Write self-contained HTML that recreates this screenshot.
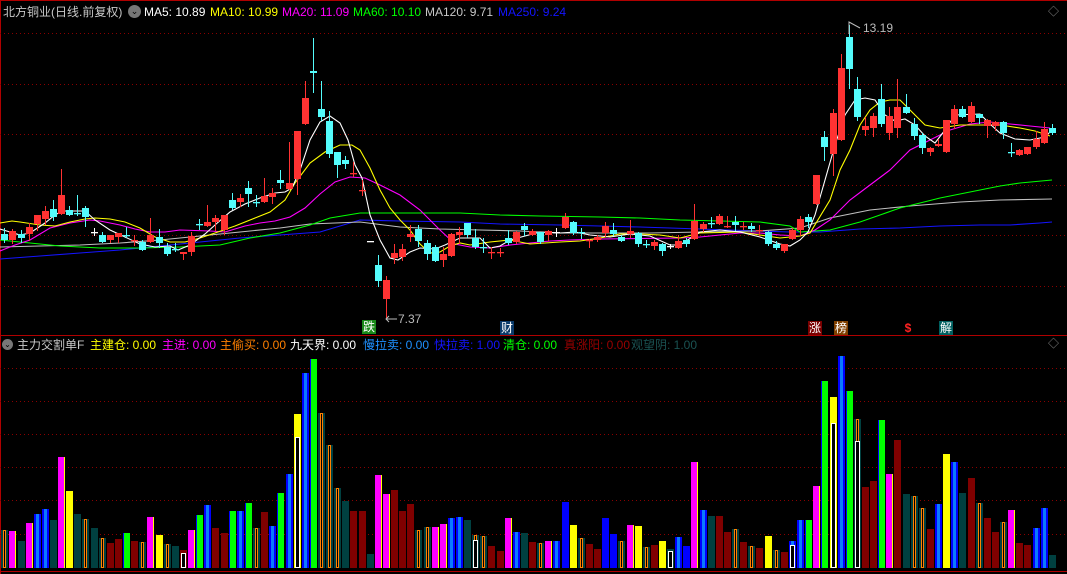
<!DOCTYPE html>
<html><head><meta charset="utf-8">
<style>
html,body{margin:0;padding:0;background:#000;}
#w{position:relative;width:1067px;height:574px;overflow:hidden;background:#000;font-family:"Liberation Sans","Noto Sans CJK SC",sans-serif;font-size:12px;}
.t{position:absolute;white-space:nowrap;line-height:14px;}
svg{position:absolute;left:0;top:0;}
.mk{position:absolute;width:14px;height:14px;color:#fff;font-size:12px;line-height:14px;text-align:center;}
</style></head><body>
<div id="w">
<svg id="s" width="1067" height="574" viewBox="0 0 1067 574"></svg>
<div class="t" style="left:3px;top:5px;color:#c8c8c8">北方铜业(日线.前复权)</div>
<div class="t" style="left:128px;top:5px;width:13px;height:13px;border-radius:7px;background:#777;color:#000;font-size:9px;line-height:13px;text-align:center">⌄</div>
<div class="t" style="left:144px;top:5px;color:#fff">MA5: 10.89</div>
<div class="t" style="left:210px;top:5px;color:#ff0">MA10: 10.99</div>
<div class="t" style="left:282px;top:5px;color:#f0f">MA20: 11.09</div>
<div class="t" style="left:353px;top:5px;color:#0f0">MA60: 10.10</div>
<div class="t" style="left:425px;top:5px;color:#c8c8c8">MA120: 9.71</div>
<div class="t" style="left:498px;top:5px;color:#1414ff">MA250: 9.24</div>
<div class="t" style="left:1048px;top:5px;color:#888;font-size:11px">◇</div>

<div class="t" style="left:2px;top:339px;width:11px;height:11px;border-radius:6px;background:#777;color:#000;font-size:8px;line-height:11px;text-align:center">⌄</div>
<div class="t" style="left:17px;top:338px;color:#c8c8c8">主力交割单F</div>
<div class="t" style="left:90px;top:338px;color:#ff0">主建仓: 0.00</div>
<div class="t" style="left:162px;top:338px;color:#f0f">主进: 0.00</div>
<div class="t" style="left:220px;top:338px;color:#ff8000">主偷买: 0.00</div>
<div class="t" style="left:290px;top:338px;color:#fff">九天界: 0.00</div>
<div class="t" style="left:363px;top:338px;color:#1e90ff">慢拉卖: 0.00</div>
<div class="t" style="left:434px;top:338px;color:#1414ff">快拉卖: 1.00</div>
<div class="t" style="left:503px;top:338px;color:#0f0">清仓: 0.00</div>
<div class="t" style="left:564px;top:338px;color:#900">真涨阳: 0.00</div>
<div class="t" style="left:631px;top:338px;color:#1a5252">观望阴: 1.00</div>
<div class="t" style="left:1048px;top:337px;color:#888;font-size:11px">◇</div>

<div class="mk" style="left:362px;top:320px;background:#1a8a1a">跌</div>
<div class="mk" style="left:500px;top:321px;background:#0a3a6a">财</div>
<div class="mk" style="left:808px;top:321px;background:#7a0000">涨</div>
<div class="mk" style="left:834px;top:321px;background:#804000">榜</div>
<div class="mk" style="left:901px;top:321px;color:#f22;font-weight:bold">$</div>
<div class="mk" style="left:939px;top:321px;background:#006060">解</div>
<div class="t" style="left:398px;top:312px;color:#bbb;font-size:12px">7.37</div>
<div class="t" style="left:863px;top:21px;color:#bbb;font-size:12px">13.19</div>
</div>
<script>
var NS="http://www.w3.org/2000/svg",S=document.getElementById('s');
function el(n,a){var e=document.createElementNS(NS,n);for(var k in a)e.setAttribute(k,a[k]);S.appendChild(e);return e;}
el('line',{x1:0,y1:0.5,x2:1067,y2:0.5,stroke:'#b00000'});
el('line',{x1:0,y1:335.5,x2:1067,y2:335.5,stroke:'#b00000'});
el('line',{x1:0,y1:571.5,x2:1067,y2:571.5,stroke:'#b00000'});
el('line',{x1:0.5,y1:0,x2:0.5,y2:574,stroke:'#b00000'});
[33.5,84.5,134.5,185.5,235.5,286.5,368.5,401.5,434.5,467.5,500.5,534.5].forEach(function(y){
 el('line',{x1:0,y1:y,x2:1067,y2:y,stroke:'#8a0000','stroke-dasharray':'1,3'});});
function X(i){return 4.3+8.12*i;}
function pl(pts,c){el('polyline',{points:pts.map(function(p){return p.join(',')}).join(' '),fill:'none',stroke:c,'stroke-width':1.1});}
pl([[0,259],[40,256],[80,253],[120,250],[160,246],[200,242],[240,238],[280,235],[320,232],[360,220],[400,221],[460,222],[500,224],[560,225],[600,226],[640,227],[700,229],[760,231],[790,232],[820,232],[860,229],[900,228],[940,226],[980,225],[1010,225],[1040,223],[1052,222]],'#1414ff');
pl([[0,247],[40,246],[80,245],[120,243],[160,240],[200,236],[240,232],[280,228],[310,224],[360,222],[400,227],[440,229],[480,230],[520,231],[560,233],[600,233],[650,233],[700,232],[760,231],[800,228],[830,218],[870,210],[910,206],[960,202],[1000,200],[1052,199]],'#c0c0c0');
pl([[0,240],[20,242],[40,244],[60,246],[100,248],[140,248],[180,247],[220,245],[250,238],[280,233],[310,225],[330,218],[360,213],[420,213],[460,213],[500,215],[540,216],[600,217],[640,218],[680,220],[720,221],[760,222],[790,226],[800,232],[830,230],[860,222],[880,215],[900,208],[940,198],[980,190],[1000,186],[1020,183],[1052,180]],'#00ff00');
pl([[0,251],[15,245],[30,240],[50,228],[70,223],[90,220],[100,221],[120,225],[135,229],[150,232],[165,232],[180,230],[210,231],[225,232],[245,226],[260,223],[275,221],[290,217],[305,208],[320,194],[335,182],[350,177],[365,178],[380,185],[400,195],[420,210],[440,230],[455,244],[470,247],[490,248],[510,245],[530,243],[550,241],[570,240],[600,239],[680,238],[700,237],[720,235],[740,233],[760,233],[780,235],[800,236],[815,230],[830,220],[850,200],[870,185],[890,170],[910,150],[930,140],[950,130],[970,124],[990,122],[1010,124],[1030,126],[1050,128]],'#ff00ff');
pl([[0,223],[12,221],[20,222],[40,225],[55,226],[70,222],[85,219],[95,218],[110,219],[125,222],[140,228],[155,237],[170,242],[185,242],[200,238],[215,233],[235,226],[255,218],[270,212],[285,200],[295,183],[310,163],[325,152],[340,145],[352,145],[360,150],[370,168],[380,190],[390,208],[400,220],[410,230],[420,244],[430,253],[440,252],[450,246],[460,243],[470,245],[490,242],[510,240],[530,244],[560,242],[580,241],[600,238],[620,234],[640,234],[660,235],[680,238],[700,233],[740,232],[760,235],[780,238],[800,236],[810,233],[830,200],[840,170],[850,150],[860,125],[870,110],[880,102],[890,100],[900,100],[910,110],[925,125],[940,128],[960,125],[1000,125],[1020,128],[1035,131],[1050,136]],'#ffff00');
pl([[0,229],[10,232],[20,235],[30,233],[45,223],[55,215],[62,211],[85,211],[95,220],[110,230],[125,237],[140,244],[155,247],[170,246],[178,250],[190,245],[205,234],[215,225],[230,212],[245,204],[260,198],[275,193],[285,192],[292,188],[300,170],[310,140],[320,122],[330,116],[340,123],[348,140],[355,165],[362,178],[370,215],[380,240],[390,258],[398,260],[410,252],[420,248],[435,249],[445,245],[460,238],[480,238],[490,248],[500,246],[510,240],[525,236],[540,232],[560,233],[575,232],[590,235],[610,237],[630,234],[650,236],[670,245],[680,245],[700,232],[720,230],[740,232],[760,237],[780,244],[790,246],[800,240],[808,232],[815,215],[825,180],[835,145],[845,115],[855,100],[865,98],[875,100],[885,115],[895,121],[905,119],[915,125],[925,136],[935,143],[945,130],[955,115],[980,114],[990,124],[1000,133],[1015,139],[1030,140],[1045,137],[1050,132]],'#ffffff');
var C="c 234 240 228 242|r 231 240 229 243|c 234 238 230 242|r 227 234 223 240|r 215 224 215 230|r 211 219 206 224|c 209 217 200 220|r 195 214 169 214|c 210 215 206 215|c 213 213 195 215|c 208 217 206 226|w 232 232 228 235|c 235 242 232 242|r 235 240 235 242|r 233 237 233 242|c 235 235 227 237|r 240 240 235 245|c 242 250 240 250|r 235 242 218 242|c 237 243 229 247|c 247 254 243 255|c 249 249 243 251|r 252 254 252 259|r 236 252 232 255|c 224 224 219 229|r 222 226 205 226|r 218 222 215 230|r 215 230 215 234|c 200 208 193 209|r 198 202 194 206|c 188 194 181 206|c 202 202 195 206|r 196 202 178 202|r 193 197 188 203|c 180 183 170 188|r 183 189 142 189|r 131 179 131 194|r 98 124 81 124|c 71 73 38 92|c 109 117 81 120|c 121 154 111 157|c 152 165 152 177|c 160 164 156 168|r 173 173 162 176|r 190 190 180 195|w 241 241 241 241|c 265 281 255 286|r 280 299 276 318|r 253 258 244 263|r 249 257 244 260|r 234 237 225 241|c 229 241 225 246|c 243 254 240 259|c 247 261 245 261|r 254 260 247 266|r 234 256 233 256|r 232 235 227 243|c 223 235 223 237|c 238 247 229 248|c 247 247 238 252|r 252 252 247 258|r 252 252 248 256|c 238 243 230 244|r 232 242 231 243|c 226 230 223 235|r 231 235 229 235|c 232 242 232 243|r 231 235 230 240|w 232 232 228 236|r 217 228 213 228|c 222 233 221 234|c 232 232 228 238|r 240 240 239 247|r 237 240 235 241|r 226 233 222 236|c 230 234 223 235|c 237 241 235 241|r 231 234 220 237|c 233 244 232 246|c 244 244 240 247|r 242 246 240 249|c 244 251 243 255|w 246 246 244 248|r 241 248 235 248|c 240 244 238 246|r 221 239 204 239|r 224 229 222 231|c 223 223 217 227|r 216 224 214 224|r 226 226 216 227|c 222 225 216 230|r 226 226 222 229|c 226 229 223 231|r 230 230 225 235|c 232 244 231 245|c 244 248 241 249|r 244 251 244 252|r 230 239 228 239|r 219 230 216 235|c 217 222 214 227|r 175 204 175 204|c 137 147 131 160|r 113 154 109 175|r 68 140 54 140|c 37 69 25 88|c 89 117 77 120|r 126 130 117 135|r 116 128 113 136|c 99 124 84 126|r 116 133 107 139|r 107 128 79 137|c 107 113 94 113|c 124 136 118 139|c 135 148 133 153|r 148 152 147 155|r 144 146 139 146|r 120 152 120 152|r 109 124 105 128|c 109 117 106 117|r 106 122 102 122|c 114 118 114 123|r 120 126 119 137|r 122 126 121 130|c 122 133 121 138|c 152 152 143 156|r 150 155 149 155|r 147 154 147 154|r 139 147 131 148|r 129 143 122 143|c 128 133 124 134".split('|');
C.forEach(function(s,i){var p=s.split(' '),t=p[0],a=+p[1],b=+p[2],h=+p[3],l=+p[4];
 var col=t=='r'?'#ff3232':(t=='c'?'#54fcfc':'#ffffff');var cx=Math.round(X(i))+0.5,x0=Math.round(X(i))-3;
 if(l>h)el('line',{x1:cx,y1:h,x2:cx,y2:l+1,stroke:col});
 if(b-a<1.5)el('rect',{x:x0,y:a,width:7,height:1.3,fill:col});
 else el('rect',{x:x0,y:a,width:7,height:b-a,fill:col});});
el('polyline',{points:'386,319 397,319',stroke:'#bbb',fill:'none'});
el('polyline',{points:'389,316 386,319 389,322',stroke:'#bbb',fill:'none'});
el('polyline',{points:'849,34 849,22 860,28',stroke:'#bbb',fill:'none'});
var B="O530 M531 T541 M523 B514 B509 T520 M457 Y491 T514 O519 T528 O538 R543 R539 G533 R541 O542 M517 Y535 O544 T546 W550:553:R M530 G515 B505 R528 R533 G511 B511 G503 O528 R512 B526 G493 B474 W414:437:Y B373 G359 O413 O445 O488 T501 R511 R511 T554 M475 M494 R490 R511 R504 O530 O527 M527 M524 B518 B517 T520 W535:540:O O536 R546 R551 M518 B532 T533 R542 O543 M541 B541 D502 Y525 O538 R544 R549 D518 D534 O541 M525 Y526 O547 R545 Y541 W549:551:T B537 D546 M462 B510 T516 R516 R532 O529 R542 O546 R548 Y536 O550 R552 W541:545:B B520 G520 M486 G381 W397:423:Y B356 G391 W419:441:O R487 R481 G420 M474 R440 T494 O496 O508 R529 B504 Y454 B462 T493 R478 O503 R518 R532 O522 M510 R543 R545 B528 B508 T555".split(' ');
var BOT=568;
function bar(t,x,y){var h=BOT-y;
 if(t=='M'){el('rect',{x:x,y:y,width:6,height:h,fill:'#ff00ff'});el('rect',{x:x+6,y:y,width:1,height:h,fill:'#ffff00'});}
 else if(t=='Y')el('rect',{x:x,y:y,width:7,height:h,fill:'#ffff00'});
 else if(t=='B'){el('rect',{x:x,y:y,width:7,height:h,fill:'#0000ff'});el('rect',{x:x+2,y:y,width:3,height:h,fill:'#0a7aff'});}
 else if(t=='D')el('rect',{x:x,y:y,width:7,height:h,fill:'#0000ff'});
 else if(t=='G'){el('rect',{x:x,y:y,width:7,height:h,fill:'#00ff00'});el('rect',{x:x,y:y,width:1,height:h,fill:'#0000ff'});}
 else if(t=='T')el('rect',{x:x,y:y,width:7,height:h,fill:'#004040'});
 else if(t=='R')el('rect',{x:x,y:y,width:7,height:h,fill:'#800000'});
 else if(t=='O'){el('rect',{x:x,y:y,width:7,height:h,fill:'#004040'});el('rect',{x:x+2.5,y:y+0.5,width:2,height:h-1,fill:'#000',stroke:'#ff8000'});}
}
B.forEach(function(s,i){var x=Math.round(X(i))-3,t=s[0];
 if(t=='W'){var p=s.slice(1).split(':');bar(p[2],x,+p[0]);var y2=+p[1];
   el('rect',{x:x+1.5,y:y2+0.5,width:4,height:BOT-y2-1,fill:'#000',stroke:'#fff'});}
 else bar(t,x,+s.slice(1));});
</script>
</body></html>
